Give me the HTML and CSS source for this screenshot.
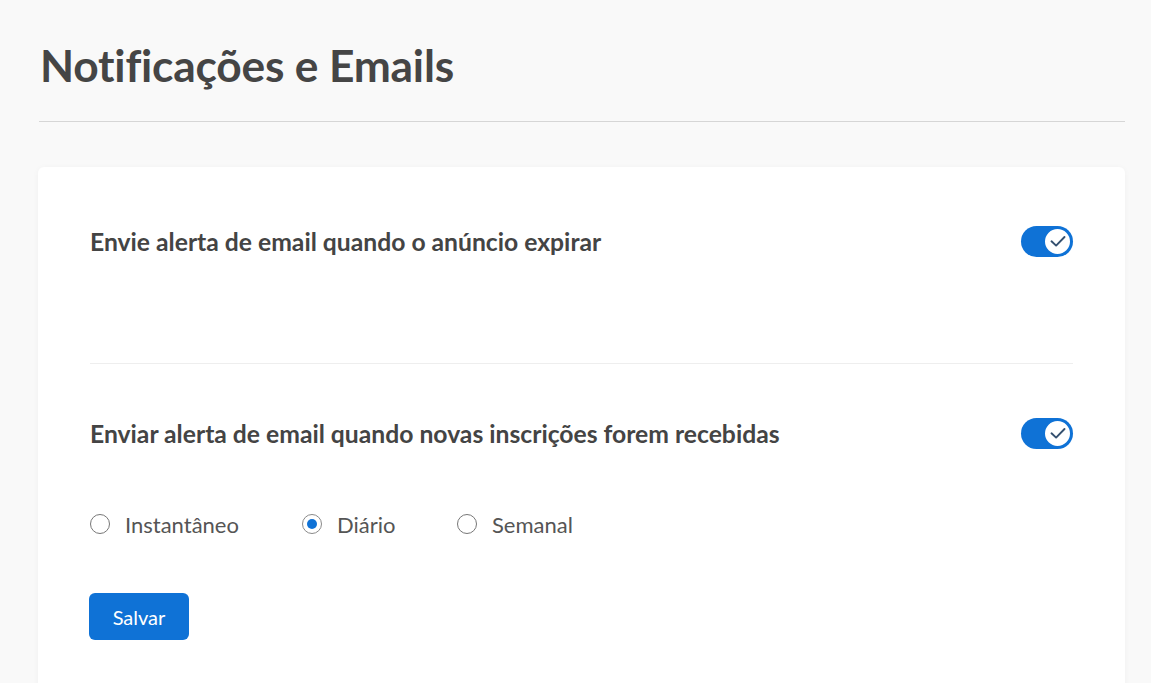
FILE: index.html
```html
<!DOCTYPE html>
<html lang="pt">
<head>
<meta charset="utf-8">
<link rel="stylesheet" href="styles.css">
</head>
<body>
<div class="page">
  <h1 class="title">Notificações e Emails</h1>
  <hr class="rule">
  <div class="card">
    <div class="section first">
      <div class="row">
        <span class="label">Envie alerta de email quando o anúncio expirar</span>
        <span class="toggle"><span class="knob"><svg viewBox="0 0 24 24" width="24" height="24"><path d="M5.5 12.3l4.6 4.3 8.4-8.6" fill="none" stroke="#34506f" stroke-width="1.9" stroke-linecap="round" stroke-linejoin="round"/></svg></span></span>
      </div>
    </div>
    <div class="divider"></div>
    <div class="section second">
      <div class="row">
        <span class="label">Enviar alerta de email quando novas inscrições forem recebidas</span>
        <span class="toggle"><span class="knob"><svg viewBox="0 0 24 24" width="24" height="24"><path d="M5.5 12.3l4.6 4.3 8.4-8.6" fill="none" stroke="#34506f" stroke-width="1.9" stroke-linecap="round" stroke-linejoin="round"/></svg></span></span>
      </div>
      <div class="radios">
        <label class="radio r1"><span class="dot"></span><span class="rtext">Instantâneo</span></label>
        <label class="radio r2"><span class="dot on"></span><span class="rtext">Diário</span></label>
        <label class="radio r3"><span class="dot"></span><span class="rtext">Semanal</span></label>
      </div>
      <button class="save">Salvar</button>
    </div>
  </div>
</div>
</body>
</html>
```
FILE: styles.css
```css
html, body {
  margin: 0;
  padding: 0;
  background: #f9f9f9;
  height: 100%;
  overflow: hidden;
}
body {
  font-family: "Source Sans Pro", Lato, "Liberation Sans", sans-serif;
  color: #444;
}
.page {
  padding: 0 26px 0 38px;
  display: flex;
  flex-direction: column;
}
.title {
  margin: 38px 0 0 2px;
  font-size: 44.3px;
  font-weight: 700;
  line-height: 54px;
  color: #454545;
  letter-spacing: -0.2px;
}
.rule {
  margin: 29px 0 0 1px;
  border: 0;
  border-top: 1px solid #d6d6d6;
  height: 0;
}
.card {
  margin-top: 45px;
  background: #fff;
  border-radius: 6px 6px 0 0;
  box-shadow: 0 1px 6px rgba(0,0,0,0.04);
  padding: 58px 52px 80px 52px;
  min-height: 500px;
}
.section.first {
  padding-bottom: 106px;
}
.row {
  display: flex;
  align-items: center;
  justify-content: space-between;
  height: 32px;
}
.label {
  font-size: 24.7px;
  font-weight: 700;
  color: #444;
}
.toggle {
  width: 52px;
  height: 31px;
  border-radius: 16px;
  background: #0f72d6;
  position: relative;
  flex: none;
}
.knob {
  position: absolute;
  right: 1px;
  top: 1px;
  width: 25px;
  height: 25px;
  border-radius: 50%;
  background: #fff;
  border: 2px solid #0f72d6;
  display: flex;
  align-items: center;
  justify-content: center;
}
.divider {
  height: 1px;
  background: #eeeeee;
}
.section.second {
  padding-top: 53px;
}
.radios {
  display: flex;
  align-items: center;
  margin-top: 63px;
  height: 24px;
}
.radio {
  display: flex;
  align-items: center;
  font-size: 22px;
  color: #555;
}
.r1 { width: 212px; }
.r2 { width: 155px; }
.dot {
  width: 20px;
  height: 20px;
  border-radius: 50%;
  border: 1px solid #777;
  box-sizing: border-box;
  margin-right: 15px;
  position: relative;
  background: #fff;
}
.dot.on {
  border-color: #8a8a8a;
}
.dot.on::after {
  content: "";
  position: absolute;
  left: 4px;
  top: 4px;
  width: 10px;
  height: 10px;
  border-radius: 50%;
  background: #0f72d6;
}
.save {
  margin-top: 57px;
  margin-left: -1px;
  width: 100px;
  height: 47px;
  background: #0f72d6;
  color: #fff;
  border: 0;
  border-radius: 6px;
  font-family: inherit;
  font-size: 20px;
  padding: 0;
}
```
